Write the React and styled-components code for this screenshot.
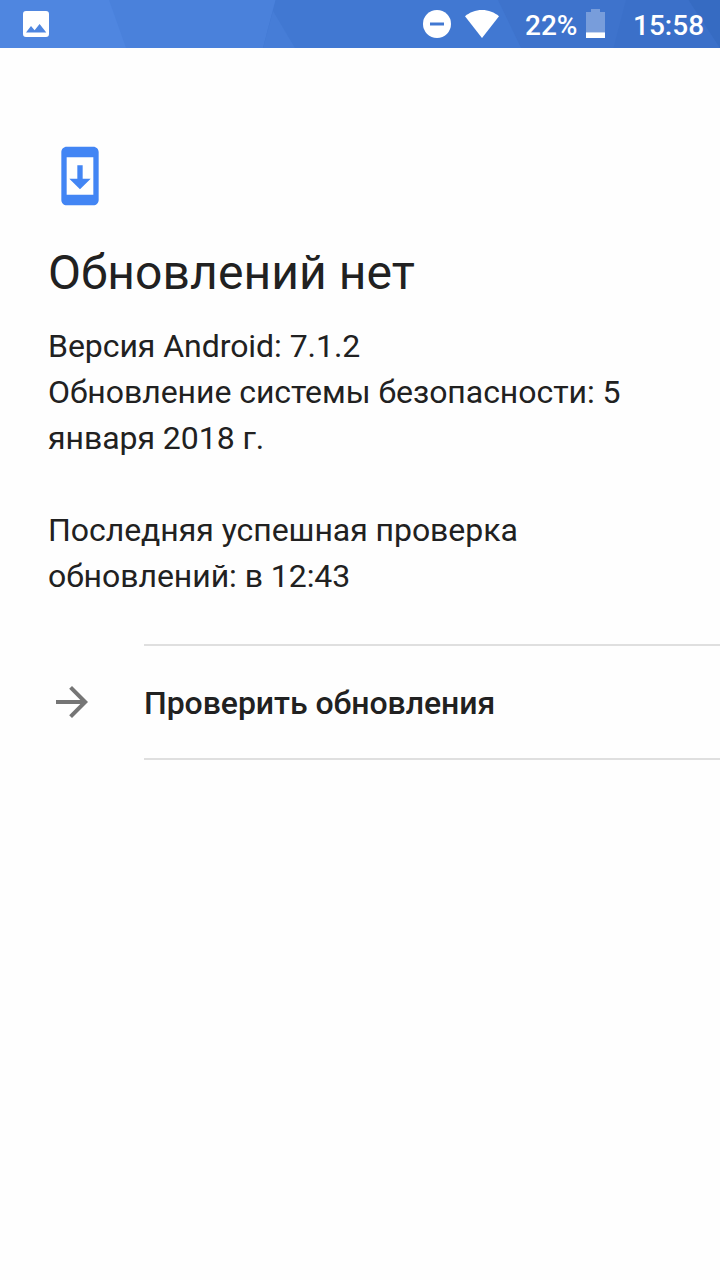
import React from 'react';
import styled, { createGlobalStyle } from 'styled-components';

const App = () => {
  return (
    <Screen>
      <GlobalStyle />
      <StatusBar>
        <Facets viewBox="0 0 720 48" preserveAspectRatio="none">
          <path fill="#4f86e0" d="M0 0h120l10 48H0z" />
          <path fill="#4a81db" d="M109 0h167l-12 48H126z" />
          <path fill="#4178d2" d="M275.500 0H510v48H263z" />
          <path fill="#467dd7" d="M273 11l22 37h-32z" />
          <path fill="#3e73cc" d="M498 0h222v48H521z" />
          <path fill="#3b70c9" d="M626 0h94v48H613.500z" />
          <path fill="#366bc2" d="M688.500 0H720v48z" />
        </Facets>
        <PictureIcon viewBox="0 0 26 26">
          <path
            fill="#fff"
            fillRule="evenodd"
            d="M3 0h20a3 3 0 0 1 3 3v20a3 3 0 0 1-3 3H3a3 3 0 0 1-3-3V3a3 3 0 0 1 3-3zM3 21.500h20.300L16.600 13l-5 6.200L8 15z"
          />
        </PictureIcon>
        <DndIcon viewBox="0 0 28 28">
          <circle cx="14" cy="14" r="14" fill="#fff" />
          <path fill="#4178d2" d="M7 12.500h14v3H7z" />
        </DndIcon>
        <WifiIcon viewBox="0 0 34 28">
          <path fill="#fff" d="M17 28L0 6.200C4.500 2.400 10.500 0 17 0s12.500 2.400 17 6.200z" />
        </WifiIcon>
        <Percent>22%</Percent>
        <BatteryIcon viewBox="0 0 19 29">
          <path fill="#fff" fillOpacity=".3" d="M5 0h9v3h5v20H0V3h5z" />
          <path fill="#fff" d="M0 23.300h19V29H0z" />
        </BatteryIcon>
        <Clock>15:58</Clock>
      </StatusBar>

      <Content>
        <UpdateIcon viewBox="0 0 24 24">
          <path d="M17 1.010L7 1c-1.100 0-2 .9-2 2v18c0 1.100.9 2 2 2h10c1.100 0 2-.9 2-2V3c0-1.100-.9-1.990-2-1.990zM17 19H7V5h10v14zm-1-6h-3V8h-2v5H8l4 4 4-4z" />
        </UpdateIcon>
        <Title>Обновлений нет</Title>
        <Text>
          Версия Android: 7.1.2
          <br />
          Обновление системы безопасности: 5
          <br />
          января 2018 г.
        </Text>
        <Text>
          Последняя успешная проверка
          <br />
          обновлений: в 12:43
        </Text>
      </Content>

      <Action>
        <ArrowIcon viewBox="0 0 24 24">
          <path d="M12 4l-1.410 1.410L16.170 11H4v2h12.170l-5.580 5.590L12 20l8-8z" />
        </ArrowIcon>
        <ActionLabel>Проверить обновления</ActionLabel>
      </Action>
    </Screen>
  );
};

export default App;

// style:

const GlobalStyle = createGlobalStyle`
  body {
    margin: 0;
    background: #fefefe;
  }
`;

const Screen = styled.div`
  display: flex;
  flex-direction: column;
  width: 720px;
  height: 1280px;
  overflow: hidden;
  background: #fefefe;
  color: #212121;
  font-family: Roboto, "Noto Sans", sans-serif;
`;

const StatusBar = styled.header`
  position: relative;
  display: flex;
  align-items: flex-start;
  flex: none;
  box-sizing: border-box;
  height: 48px;
  padding-left: 23px;
  background: #4178d2;
  color: #fff;
`;

// sits behind the status icons
const Facets = styled.svg`
  position: absolute;
  inset: 0;
  width: 100%;
  height: 100%;
`;

const StatusIcon = styled.svg`
  position: relative;
  flex: none;
`;

const PictureIcon = styled(StatusIcon)`
  width: 26px;
  height: 26px;
  margin-top: 11px;
`;

const DndIcon = styled(StatusIcon)`
  width: 28px;
  height: 28px;
  margin: 10px 14px 0 374px;
`;

const WifiIcon = styled(StatusIcon)`
  width: 34px;
  height: 28px;
  margin-top: 10px;
`;

const BatteryIcon = styled(StatusIcon)`
  width: 19px;
  height: 29px;
  margin-top: 9px;
`;

const StatusText = styled.span`
  position: relative;
  flex: none;
  font-size: 28px;
  font-weight: 500;
  line-height: 52px;
  white-space: nowrap;
`;

const Percent = styled(StatusText)`
  width: 61px;
  margin-left: 26px;
`;

const Clock = styled(StatusText)`
  margin-left: 28px;
`;

const Content = styled.main`
  display: flex;
  flex-direction: column;
  padding: 96px 48px 45px;
`;

const UpdateIcon = styled.svg`
  width: 64px;
  height: 64px;
  fill: #4285f4;
`;

const Title = styled.h1`
  margin: 37px 0 22px;
  font-size: 48px;
  font-weight: 400;
  line-height: 56px;
  letter-spacing: 0.08px;
`;

const Text = styled.p`
  margin: 0;
  font-size: 32px;
  line-height: 46px;
  letter-spacing: -0.05px;
  white-space: nowrap;

  & + & {
    margin-top: 46px;
  }
`;

const Action = styled.div`
  display: flex;
  align-items: center;
  height: 116px;
  padding-left: 48px;
`;

const ArrowIcon = styled.svg`
  flex: none;
  width: 48px;
  height: 48px;
  margin-right: 48px;
  fill: #757575;
`;

const ActionLabel = styled.div`
  flex: 1;
  box-sizing: border-box;
  height: 116px;
  border-top: 2px solid #dfdfdf;
  border-bottom: 2px solid #dfdfdf;
  font-size: 32px;
  font-weight: 500;
  line-height: 114px;
  letter-spacing: -0.05px;
`;
